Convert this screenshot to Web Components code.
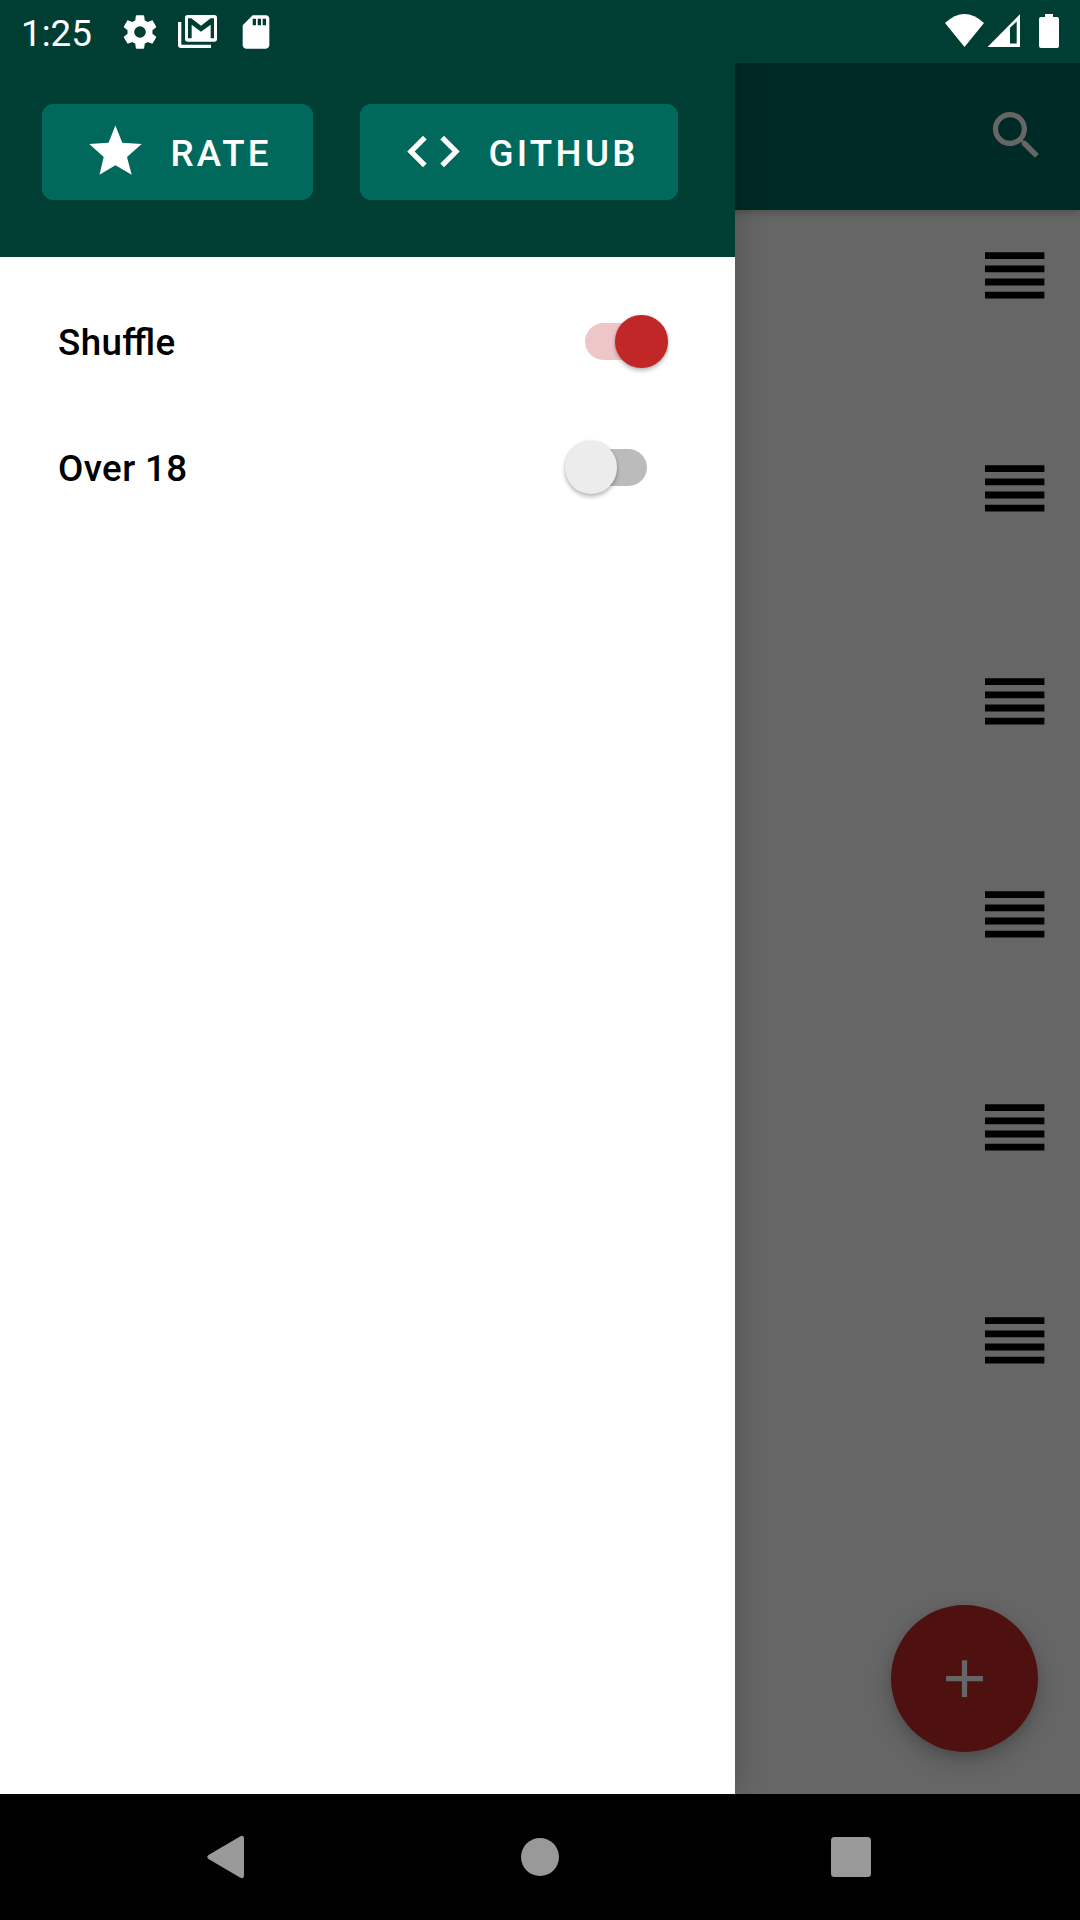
<!DOCTYPE html>
<html lang="en">
<head>
<meta charset="utf-8">
<title>Drawer</title>
<style>
html,body{margin:0;height:100%}
body{font-family:Roboto,"Noto Sans",sans-serif;overflow:hidden}
</style>
</head>
<body>
<app-screen></app-screen>
<script>
const define=(name,html)=>customElements.define(name,class extends HTMLElement{
  constructor(){super();this.attachShadow({mode:'open'}).innerHTML='<style>*{box-sizing:border-box}svg{display:block}</style>'+html;}
});

define('status-bar',`<style>
:host{display:flex;align-items:center;justify-content:space-between;height:63px;padding:0 20px 0 21px;color:#fff}
.time{font-size:36.75px;line-height:43px;width:99px;padding-top:4px}
.group{display:flex;align-items:center}
svg{fill:#fff}
</style>
<div class="group"><span class="time">1:25</span>
<svg width="40" height="40" viewBox="0 0 24 24"><path d="M19.43 12.98c.04-.32.07-.64.07-.98s-.03-.66-.07-.98l2.11-1.65c.19-.15.24-.42.12-.64l-2-3.46c-.12-.22-.39-.3-.61-.22l-2.49 1c-.52-.4-1.08-.73-1.69-.98l-.38-2.65C14.46 2.18 14.25 2 14 2h-4c-.25 0-.46.18-.49.42l-.38 2.65c-.61.25-1.17.59-1.69.98l-2.49-1c-.23-.09-.49 0-.61.22l-2 3.46c-.13.22-.07.49.12.64l2.11 1.65c-.04.32-.07.65-.07.98s.03.66.07.98l-2.11 1.65c-.19.15-.24.42-.12.64l2 3.46c.12.22.39.3.61.22l2.49-1c.52.4 1.08.73 1.69.98l.38 2.65c.03.24.24.42.49.42h4c.25 0 .46-.18.49-.42l.38-2.65c.61-.25 1.17-.59 1.69-.98l2.49 1c.23.09.49 0 .61-.22l2-3.46c.12-.22.07-.49-.12-.64l-2.11-1.65zM12 15.5a3.5 3.5 0 1 1 0-7 3.5 3.5 0 0 1 0 7z"/></svg>
<svg style="margin-left:18px" width="39" height="33" viewBox="534 45 117 99"><path fill-rule="evenodd" d="M563 45H643Q651 45 651 53V117Q651 125 643 125H563Q555 125 555 117V53Q555 45 563 45ZM564 55H574L603 77L632 55H642V115H632V74L603 95L575 74V115H564Z"/><path d="M534 66H544V134H633V144H543Q534 144 534 135Z"/></svg>
<svg style="margin-left:19px" width="40" height="40" viewBox="0 0 24 24"><path d="M18 2h-8L4.020 8 4 20c0 1.100.9 2 2 2h12c1.100 0 2-.9 2-2V4c0-1.100-.9-2-2-2zm-6 6h-2V4h2v4zm3 0h-2V4h2v4zm3 0h-2V4h2v4z"/></svg></div>
<div class="group">
<svg width="115" height="35" viewBox="945 14 115 35"><path d="M945 23Q964.500 5 984 23L964.500 47Z"/><path fill-rule="evenodd" d="M987.500 47L1020 14.300V47ZM1010 27.700V43.500H1016.700V21.500Z"/><path d="M1045 14H1053V17H1057Q1059 17 1059 19V46Q1059 48 1057 48H1041Q1039 48 1039 46V19Q1039 17 1041 17H1045Z"/></svg></div>`);

define('drawer-button',`<style>
:host{display:flex;align-items:center;gap:23.400px;height:96px;padding:0 0 0 42px;border-radius:11px;background:#00695c;color:#fff;font-weight:500;font-size:36.75px;letter-spacing:3.28px;line-height:43px}
span{padding-top:2px;white-space:nowrap}
::slotted(svg){margin-bottom:2px}
</style><slot name="icon"></slot><span><slot></slot></span>`);

define('toggle-row',`<style>
:host{display:flex;align-items:center;justify-content:space-between;height:126px;padding:0 88px 0 58px;color:#000;font-weight:500;font-size:36.75px;letter-spacing:.38px;font-feature-settings:"liga" 1;line-height:43px}
span{padding-top:3px}
.track{width:62px;height:37px;border-radius:19px;background:#bbb;display:flex;align-items:center;padding-top:1px}
.thumb{flex:none;width:52.500px;height:52.500px;border-radius:50%;background:#ececec;margin-left:-20.500px;box-shadow:0 3px 4px rgba(0,0,0,.24),0 0 3px rgba(0,0,0,.14)}
:host([on]) .track{background:#efc6c8}
:host([on]) .thumb{background:#c12727;margin-left:30px}
</style><span><slot></slot></span><div class="track"><div class="thumb"></div></div>`);

define('nav-drawer',`<style>
:host{display:flex;flex-direction:column;width:735px;background:#fff;box-shadow:0 0 30px rgba(0,0,0,.22)}
header{height:257px;background:#003d33;padding:104px 0 0 42px;display:flex;align-items:flex-start;gap:47px}
.rate{width:271px}.git{width:318px}
.rows{padding-top:21px}
svg{fill:#fff}
</style>
<header>
<drawer-button class="rate"><svg slot="icon" width="63" height="63" viewBox="84 120 63 63"><path d="M115.400 125.500L122.300 142.700L141.700 144L127 157L131.700 174.800L115.400 165.300L99.500 174.800L103.700 157L89.300 144L108.500 142.700Z"/></svg>RATE</drawer-button>
<drawer-button class="git"><svg slot="icon" width="63" height="63" viewBox="0 0 24 24"><path d="M9.400 16.600L4.800 12l4.600-4.600L8 6l-6 6 6 6 1.400-1.400zm5.200 0l4.600-4.600-4.600-4.600L16 6l6 6-6 6-1.400-1.400z"/></svg>GITHUB</drawer-button>
</header>
<div class="rows"><toggle-row on>Shuffle</toggle-row><toggle-row>Over 18</toggle-row></div>`);

define('drag-handle',`<style>
:host{display:flex;flex-direction:column;align-items:flex-end;height:213px;padding:42px 35px 0 0}
svg{fill:#000}
</style><svg width="60" height="47" viewBox="0 0 60 47"><path d="M0 .2H59.400V7.100H0ZM0 13.400H59.400V20.300H0ZM0 26.500H59.400V33.400H0ZM0 39.700H59.400V46.600H0Z"/></svg>`);

define('list-page',`<style>
:host{display:flex;flex-direction:column;background:#666}
header{height:147px;flex:none;background:#002a25;display:flex;justify-content:flex-end;align-items:center;padding:0 32px 2px 0;box-shadow:0 2px 9px rgba(0,0,0,.25);fill:#666}
.fab{position:absolute;right:42px;bottom:42px;width:147px;height:147px;border-radius:50%;background:#4f1010;display:flex;align-items:center;justify-content:center;fill:#666;box-shadow:0 9px 24px rgba(0,0,0,.22),0 4px 8px rgba(0,0,0,.08)}
</style>
<header><svg width="63" height="63" viewBox="0 0 24 24"><path d="M15.500 14h-.79l-.28-.27C15.410 12.590 16 11.110 16 9.500 16 5.910 13.090 3 9.500 3S3 5.910 3 9.500 5.910 16 9.500 16c1.610 0 3.090-.59 4.230-1.570l.27.28v.79l5 4.990L20.490 19l-4.990-5zm-6 0C7.010 14 5 11.990 5 9.500S7.010 5 9.500 5 14 7.010 14 9.500 11.990 14 9.500 14z"/></svg></header>
<main><drag-handle></drag-handle><drag-handle></drag-handle><drag-handle></drag-handle><drag-handle></drag-handle><drag-handle></drag-handle><drag-handle></drag-handle></main>
<div class="fab"><svg width="63" height="63" viewBox="0 0 24 24"><path d="M19 13h-6v6h-2v-6H5v-2h6V5h2v6h6v2z"/></svg></div>`);

define('system-nav',`<style>
:host{display:flex;align-items:center;justify-content:space-between;height:126px;padding:0 209px 0 207px;background:#000}
svg{fill:#999}
</style>
<svg width="38" height="44" viewBox="0 0 38 44"><path d="M33 1.400Q37 -.5 37 4V40Q37 44.500 33 42.600L1.500 24Q-1 22 1.500 20Z"/></svg>
<svg style="margin-left:4px" width="40" height="40" viewBox="0 0 40 40"><circle cx="20" cy="20" r="19"/></svg>
<svg width="40" height="40" viewBox="0 0 40 40"><rect width="40" height="40" rx="3.500"/></svg>`);

define('app-screen',`<style>
:host{display:grid;grid-template:63px 1731px 126px/735px 345px;width:1080px;height:1920px;overflow:hidden;background:#666}
list-page{grid-area:2/1/3/3;position:relative}
nav-drawer{grid-area:1/1/3/2;z-index:1}
.bar{grid-area:1/1/2/3;background:#003d33;z-index:2}
system-nav{grid-area:3/1/4/3;z-index:2}
</style><list-page></list-page><nav-drawer></nav-drawer><status-bar class="bar"></status-bar><system-nav></system-nav>`);
</script>
</body>
</html>
